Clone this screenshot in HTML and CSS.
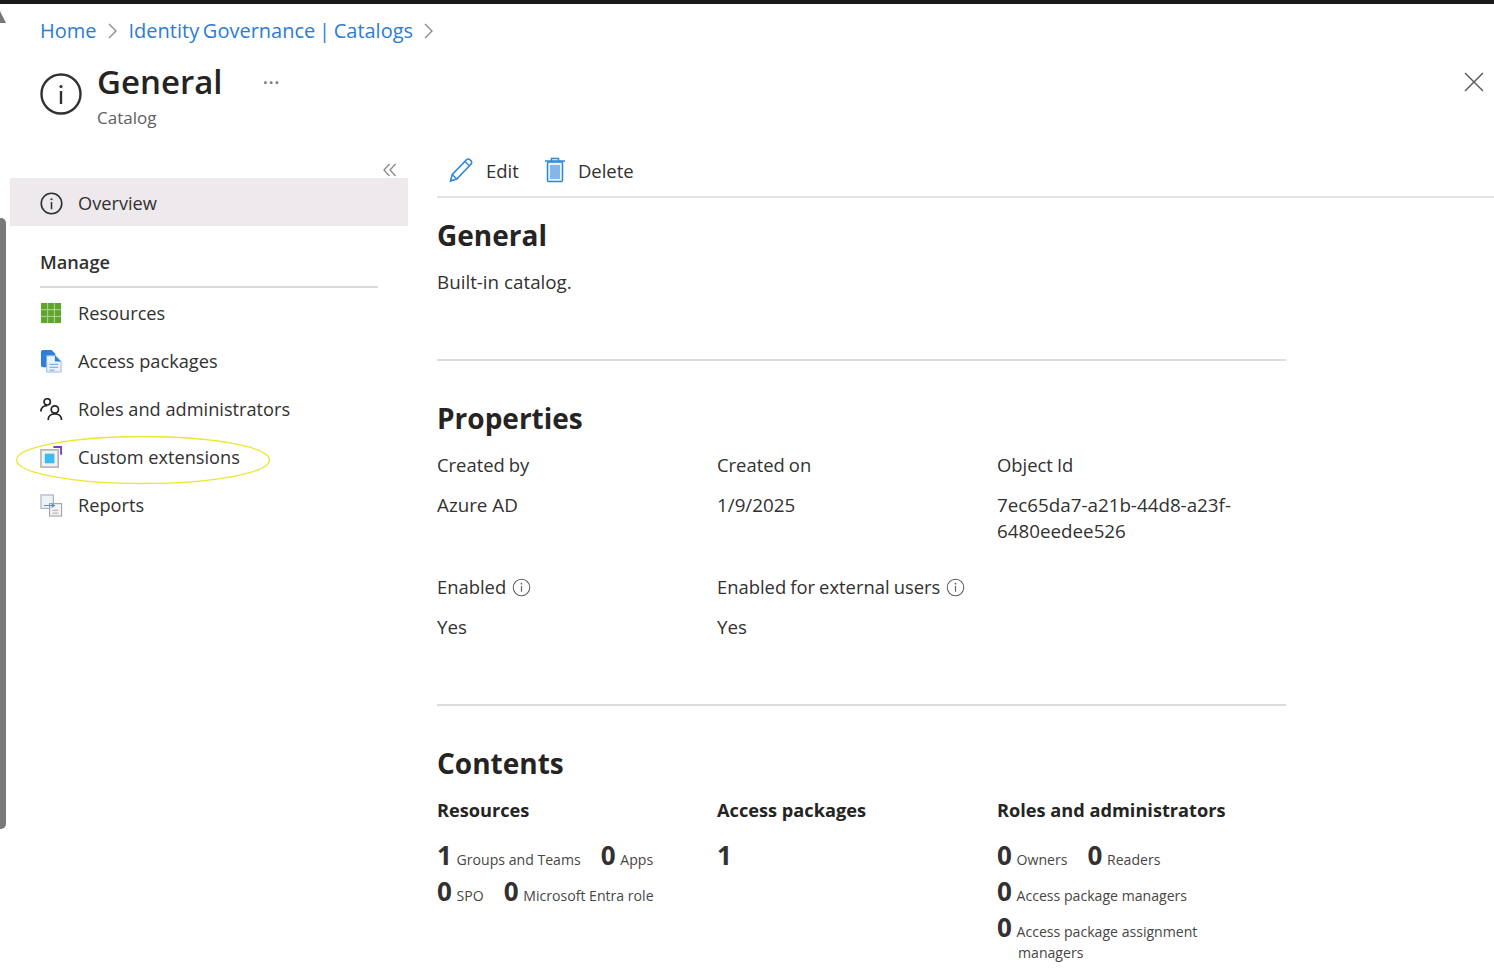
FILE: index.html
```html
<!DOCTYPE html>
<html lang="en">
<head>
  <meta charset="UTF-8">
  <title>General - Catalog</title>
  <link rel="stylesheet" href="styles.css">
</head>
<body>
  <div class="topbar"></div>
  <div class="scroll-arrow"></div>
  <div class="scroll-thumb"></div>

  <nav class="breadcrumb">
    <a href="#">Home</a>
    <svg class="crumb-sep" viewBox="0 0 12 18"><path d="M2 2l7 7-7 7" fill="none" stroke="#8a8886" stroke-width="1.3"/></svg>
    <a href="#">Identity Governance | Catalogs</a>
    <svg class="crumb-sep" viewBox="0 0 12 18"><path d="M2 2l7 7-7 7" fill="none" stroke="#8a8886" stroke-width="1.3"/></svg>
  </nav>

  <header class="page-head">
    <svg class="head-icon" viewBox="0 0 42 42">
      <circle cx="21" cy="21" r="19.5" fill="none" stroke="#323130" stroke-width="2.4"/>
      <rect x="19.8" y="18" width="2.4" height="13" fill="#323130"/>
      <circle cx="21" cy="13.5" r="1.6" fill="#323130"/>
    </svg>
    <div class="head-text">
      <div class="head-title">
        <h1>General</h1>
        <span class="more">&middot;&middot;&middot;</span>
      </div>
      <div class="head-sub">Catalog</div>
    </div>
    <svg class="close" viewBox="0 0 20 20"><path d="M1 1l18 18M19 1L1 19" stroke="#555" stroke-width="1.4" fill="none"/></svg>
  </header>

  <div class="layout">
    <aside class="sidebar">
      <div class="collapse">
        <svg viewBox="0 0 14 14" width="14" height="14"><path d="M6.5 1L1 7l5.500 6M12.500 1L7 7l5.500 6" fill="none" stroke="#8a8886" stroke-width="1.300"/></svg>
      </div>
      <a class="nav-item active" href="#">
        <svg class="nav-icon" viewBox="0 0 24 24">
          <circle cx="12" cy="12" r="10.700" fill="none" stroke="#323130" stroke-width="1.700"/>
          <rect x="11.200" y="10.500" width="1.600" height="7.500" fill="#323130"/>
          <circle cx="12" cy="7.500" r="1.100" fill="#323130"/>
        </svg>
        Overview
      </a>
      <div class="nav-group">Manage</div>
      <a class="nav-item" href="#">
        <svg class="nav-icon" viewBox="0 0 24 24">
          <rect x="1" y="1" width="21" height="21" fill="#5ea52c"/>
          <path d="M8 1v21M15 1v21M1 8h21M1 15h21" stroke="#b7d99a" stroke-width="1"/>
        </svg>
        Resources
      </a>
      <a class="nav-item" href="#">
        <svg class="nav-icon" viewBox="0 0 24 24">
          <path d="M1 2a2 2 0 0 1 2-2h9l4 4v14H3a2 2 0 0 1-2-2z" fill="#2f7fd8"/>
          <path d="M7 6h9l6 6v11H7z" fill="#eaf3fb" stroke="#8dbbe6" stroke-width="1"/>
          <path d="M15.500 5.500v6.500h6.500z" fill="#2f7fd8"/>
          <path d="M10 15h9M10 18h9M10 21h5" stroke="#5ea0dd" stroke-width="1"/>
        </svg>
        Access packages
      </a>
      <a class="nav-item" href="#">
        <svg class="nav-icon" viewBox="0 0 24 24">
          <circle cx="7.500" cy="4" r="3.300" fill="none" stroke="#252423" stroke-width="1.800"/>
          <path d="M1 14c0-4 2.500-6 6.500-6" fill="none" stroke="#252423" stroke-width="1.800"/>
          <circle cx="15.500" cy="12" r="3.800" fill="none" stroke="#252423" stroke-width="1.800"/>
          <path d="M8.500 23c0-4 3-6.500 7-6.500s7 2.500 7 6.500" fill="none" stroke="#252423" stroke-width="1.800"/>
        </svg>
        Roles and administrators
      </a>
      <a class="nav-item circled" href="#">
        <svg class="nav-icon" viewBox="0 0 24 24">
          <rect x="1" y="4" width="18" height="18" fill="#f1f1f1" stroke="#b3b0ad" stroke-width="1.600"/>
          <rect x="5" y="8" width="10" height="10" fill="#38bdf0"/>
          <path d="M14 1h8v8" fill="none" stroke="#7a3fc4" stroke-width="2"/>
        </svg>
        Custom extensions
        <svg class="ellipse" viewBox="0 0 256 50"><ellipse cx="128" cy="25" rx="126.500" ry="23.500" fill="none" stroke="#ece62e" stroke-width="1.300"/></svg>
      </a>
      <a class="nav-item" href="#">
        <svg class="nav-icon" viewBox="0 0 24 24">
          <rect x="1" y="1" width="13" height="14" fill="#eef1f5" stroke="#a9b4c2" stroke-width="1.200"/>
          <rect x="10" y="10" width="12.500" height="13" fill="#f4f4f4" stroke="#a6a6a6" stroke-width="1.200"/>
          <path d="M4 12h11M12 10l3 2-3 2" fill="none" stroke="#5b8fc7" stroke-width="1.200"/>
          <path d="M13 17h6M13 20h6" stroke="#a6a6a6" stroke-width="1"/>
        </svg>
        Reports
      </a>
    </aside>

    <main class="content">
      <div class="toolbar">
        <button class="tool">
          <svg viewBox="0 0 26 26" width="26" height="26"><path d="M2.500 24l1.800-6.500L18.500 2.800a2.400 2.400 0 0 1 3.500 0l.9.900a2.400 2.400 0 0 1 0 3.500L8.800 22z" fill="none" stroke="#2b88d8" stroke-width="1.600"/><path d="M4.300 17.500l4.500 4.500M17 4.500l4.500 4.500" stroke="#2b88d8" stroke-width="1.300"/></svg>
          Edit
        </button>
        <button class="tool">
          <svg viewBox="0 0 22 26" width="22" height="26"><rect x="3.500" y="5" width="15" height="19.500" rx="1" fill="#e9f2fb" stroke="#2b88d8" stroke-width="1.500"/><rect x="6" y="8" width="10" height="14" fill="#86b6e8"/><path d="M1 4h20M7.500 4V1.500h7V4" fill="none" stroke="#2b88d8" stroke-width="1.500"/></svg>
          Delete
        </button>
      </div>

      <section class="section first">
        <h2>General</h2>
        <p class="desc">Built-in catalog.</p>
      </section>

      <section class="section props">
        <h2>Properties</h2>
        <div class="grid">
          <div class="cell">
            <div class="label">Created by</div>
            <div class="value">Azure AD</div>
          </div>
          <div class="cell">
            <div class="label">Created on</div>
            <div class="value">1/9/2025</div>
          </div>
          <div class="cell">
            <div class="label">Object Id</div>
            <div class="value">7ec65da7-a21b-44d8-a23f-<br>6480eedee526</div>
          </div>
          <div class="cell">
            <div class="label">Enabled <svg class="info" viewBox="0 0 20 20"><circle cx="10" cy="10" r="8.700" fill="none" stroke="#605e5c" stroke-width="1.100"/><rect x="9.400" y="8.500" width="1.200" height="6" fill="#605e5c"/><circle cx="10" cy="6" r=".9" fill="#605e5c"/></svg></div>
            <div class="value">Yes</div>
          </div>
          <div class="cell">
            <div class="label">Enabled for external users <svg class="info" viewBox="0 0 20 20"><circle cx="10" cy="10" r="8.700" fill="none" stroke="#605e5c" stroke-width="1.100"/><rect x="9.400" y="8.500" width="1.200" height="6" fill="#605e5c"/><circle cx="10" cy="6" r=".9" fill="#605e5c"/></svg></div>
            <div class="value">Yes</div>
          </div>
        </div>
      </section>

      <section class="section contents">
        <h2>Contents</h2>
        <div class="grid">
          <div class="cell">
            <h3>Resources</h3>
            <div class="counts">
              <span class="count"><b>1</b> Groups and Teams</span>
              <span class="count"><b>0</b> Apps</span>
            </div>
            <div class="counts">
              <span class="count"><b>0</b> SPO</span>
              <span class="count"><b>0</b> Microsoft Entra role</span>
            </div>
          </div>
          <div class="cell">
            <h3>Access packages</h3>
            <div class="counts">
              <span class="count"><b>1</b></span>
            </div>
          </div>
          <div class="cell">
            <h3>Roles and administrators</h3>
            <div class="counts">
              <span class="count"><b>0</b> Owners</span>
              <span class="count"><b>0</b> Readers</span>
            </div>
            <div class="counts">
              <span class="count"><b>0</b> Access package managers</span>
            </div>
            <div class="counts">
              <span class="count"><b>0</b> Access package assignment</span>
            </div>
            <div class="wrapped">managers</div>
          </div>
        </div>
      </section>
    </main>
  </div>
</body>
</html>
```

FILE: styles.css
```css
* {
  box-sizing: border-box;
}

html, body {
  height: 979px;
  overflow: hidden;
}

body {
  margin: 0;
  background: #fff;
  color: #323130;
  font-family: "Open Sans", "Noto Sans", sans-serif;
  font-size: 18.2px;
  position: relative;
}

a {
  text-decoration: none;
  color: inherit;
}

.topbar {
  height: 4px;
  background: #1b1a19;
}

.scroll-arrow {
  position: absolute;
  left: -6px;
  top: 11px;
  border-left: 6px solid transparent;
  border-right: 6px solid transparent;
  border-bottom: 12px solid #777;
}

.scroll-thumb {
  position: absolute;
  left: 0;
  top: 218px;
  width: 6px;
  height: 611px;
  background: #7a7a7a;
  border-radius: 0 5px 5px 0;
}

.breadcrumb {
  display: flex;
  align-items: center;
  gap: 10px;
  height: 26px;
  margin-top: 14px;
  padding-left: 40px;
  color: #2b7cd3;
  font-size: 20px;
  word-spacing: -1.5px;
  line-height: 26px;
}

.crumb-sep {
  width: 12px;
  height: 18px;
}

.page-head {
  display: flex;
  align-items: flex-start;
  padding: 16px 10px 0 40px;
  height: 104px;
}

.head-icon {
  width: 42px;
  height: 42px;
  margin-top: 13px;
  margin-right: 15px;
}

.head-text {
  flex: 1;
}

.head-title {
  display: flex;
  align-items: center;
  gap: 40px;
}

h1 {
  margin: 0;
  font-size: 33px;
  font-weight: 600;
  line-height: 44px;
  color: #252423;
}

.more {
  color: #777;
  font-size: 22px;
  line-height: 1;
  margin-top: -2px;
}

.head-sub {
  font-size: 17px;
  line-height: 24px;
  color: #605e5c;
  margin-top: 2px;
}

.close {
  width: 20px;
  height: 20px;
  margin-top: 12px;
}

.layout {
  display: flex;
}

.sidebar {
  width: 398px;
  margin-left: 10px;
  flex: none;
}

.collapse {
  display: flex;
  justify-content: flex-end;
  height: 24px;
  padding: 9px 11px 0 0;
  margin-top: 6px;
}

.nav-item {
  display: flex;
  align-items: center;
  gap: 15px;
  height: 48px;
  padding: 2px 0 0 30px;
  position: relative;
}

.nav-item.active {
  background: #ede9ed;
}

.nav-icon {
  width: 23px;
  height: 23px;
  flex: none;
}

.nav-group {
  margin: 23px 30px 0;
  padding-bottom: 11px;
  border-bottom: 2px solid #d9d9d9;
  font-weight: 600;
  line-height: 26px;
}

.ellipse {
  position: absolute;
  left: 5px;
  top: 3px;
  width: 256px;
  height: 50px;
}

.content {
  margin-left: 29px;
  flex: 1;
  font-size: 18.800px;
}

.toolbar {
  display: flex;
  gap: 25px;
  height: 50px;
  padding: 0 0 4px 11px;
  align-items: center;
  border-bottom: 2px solid #e3e3e3;
}

.tool {
  display: flex;
  align-items: center;
  gap: 12px;
  padding: 0;
  border: 0;
  background: none;
  color: #323130;
  font-family: inherit;
  font-size: 18.500px;
}

.section {
  width: 849px;
  border-bottom: 2px solid #dcdcdc;
}

.section.first {
  height: 163px;
  padding-top: 19px;
}

.section.props {
  height: 345px;
  padding-top: 39px;
}

.section.contents {
  border-bottom: 0;
  padding-top: 39px;
}

h2 {
  margin: 0;
  font-size: 28px;
  font-weight: 700;
  line-height: 36px;
  color: #252423;
}

.desc {
  margin: 16px 0 0;
  line-height: 26px;
}

.grid {
  display: grid;
  grid-template-columns: 280px 280px 280px;
  margin-top: 16px;
}

.cell {
  min-height: 122px;
}

.label {
  font-size: 18.400px;
  word-spacing: -.7px;
  line-height: 26px;
  display: flex;
  align-items: center;
  gap: 6px;
}

.value {
  margin-top: 14px;
  line-height: 26px;
}

.info {
  width: 19px;
  height: 19px;
}

h3 {
  margin: 0 0 14px;
  font-size: 18.200px;
  font-weight: 700;
  line-height: 26px;
  color: #252423;
}

.counts {
  display: flex;
  gap: 20px;
  height: 36px;
  align-items: center;
}

.count {
  font-size: 14.100px;
  color: #484644;
}

.count b {
  font-size: 26px;
  font-weight: 700;
  color: #323130;
  margin-right: 1px;
}

.wrapped {
  margin: -3px 0 0 21px;
  font-size: 14.100px;
  line-height: 22px;
  color: #484644;
}
```
